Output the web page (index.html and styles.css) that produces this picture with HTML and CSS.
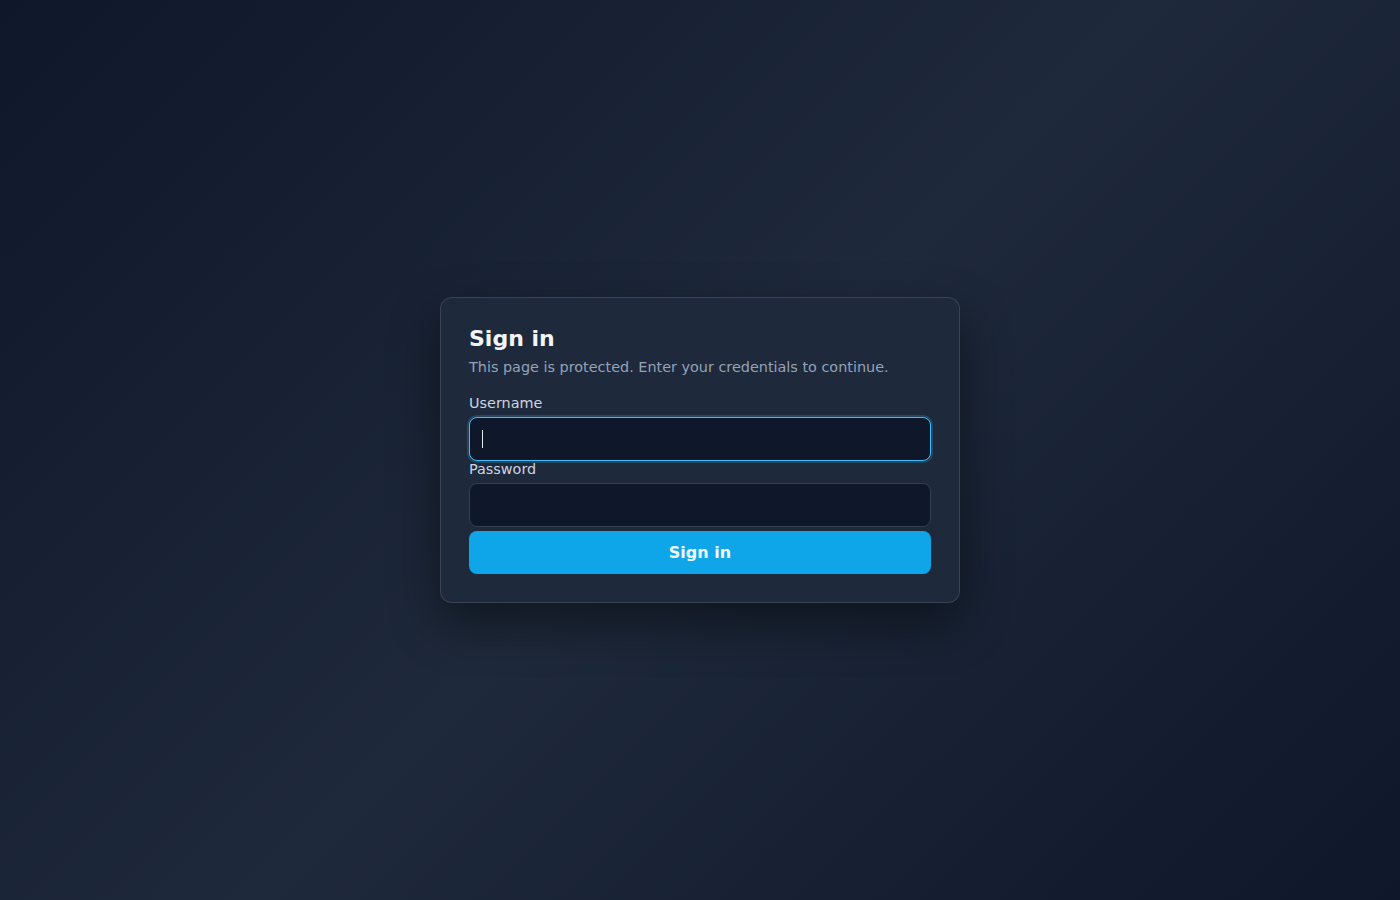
FILE: index.html
```html
<!DOCTYPE html>
<html lang="en">
<head>
<meta charset="utf-8">
<title>Sign in</title>
<link rel="stylesheet" href="styles.css">
</head>
<body>
<main class="page">
  <form class="card" onsubmit="return false">
    <h1 class="title">Sign in</h1>
    <p class="subtitle">This page is protected. Enter your credentials to continue.</p>
    <label class="label" for="username">Username</label>
    <div class="field">
      <input class="input is-focus" id="username" type="text" autocomplete="username">
      <span class="caret"></span>
    </div>
    <label class="label" for="password">Password</label>
    <div class="field">
      <input class="input" id="password" type="password" autocomplete="current-password">
    </div>
    <button class="button" type="submit">Sign in</button>
  </form>
</main>
</body>
</html>
```
FILE: styles.css
```css
* { box-sizing: border-box; }
html, body { margin: 0; height: 100%; }
body {
  font-family: "DejaVu Sans", "Noto Sans", sans-serif;
  background: linear-gradient(135deg, #0f172a 0%, #1e293b 50%, #0f172a 100%);
  color: #e2e8f0;
}
.page {
  height: 100vh;
  display: flex;
  align-items: center;
  justify-content: center;
}
.card {
  width: 520px;
  padding: 28px;
  background: #1e293b;
  border: 1px solid rgba(148, 163, 184, 0.22);
  border-radius: 12px;
  box-shadow: 0 20px 50px rgba(0, 0, 0, 0.45);
  display: flex;
  flex-direction: column;
}
.title {
  margin: 0;
  font-size: 22px;
  font-weight: 700;
  line-height: 26px;
  color: #f1f5f9;
}
.subtitle {
  margin: 7px 0 20px;
  font-size: 14.4px;
  line-height: 16px;
  color: #94a3b8;
}
.label {
  font-size: 14.4px;
  line-height: 16px;
  color: #cbd5e1;
  margin-bottom: 6px;
}
.field { position: relative; }
.input {
  display: block;
  width: 100%;
  height: 44px;
  padding: 0 12px;
  background: #0f172a;
  border: 1px solid #334155;
  border-radius: 8px;
  color: #e2e8f0;
  font: inherit;
  font-size: 14.4px;
  outline: none;
}
.input.is-focus {
  border-color: #38bdf8;
  box-shadow: 0 0 0 2px rgba(56, 189, 248, 0.2);
}
.caret {
  position: absolute;
  left: 13px;
  top: 13px;
  width: 1px;
  height: 18px;
  background: #e2e8f0;
}
.button {
  margin-top: 4px;
  height: 43px;
  border: none;
  border-radius: 8px;
  background: #0ea5e9;
  color: #f0f9ff;
  font: inherit;
  font-size: 16px;
  font-weight: 700;
  cursor: pointer;
}
```
